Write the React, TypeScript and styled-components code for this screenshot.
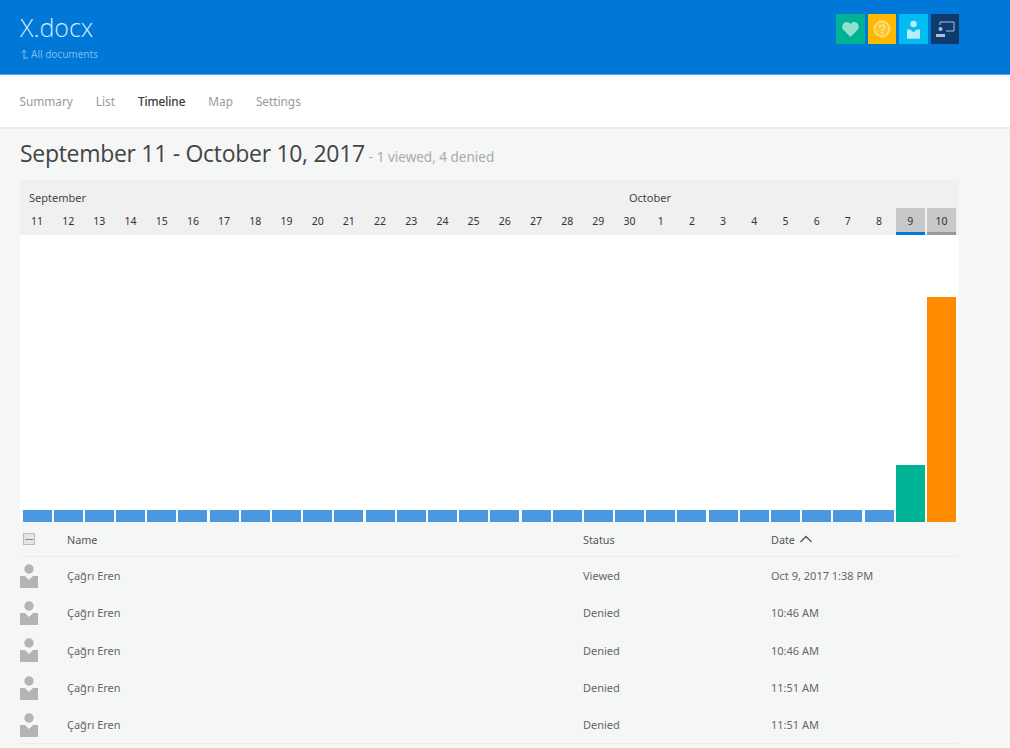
import { FC } from "react";
import styled, { createGlobalStyle } from "styled-components";

const GlobalStyle = createGlobalStyle`
  html, body {
    margin: 0;
    padding: 0;
    background: #f5f7f7;
    font-family: "Noto Sans", "Open Sans", sans-serif;
  }
`;

const Page = styled.div`
  width: 1010px;
  height: 748px;
  overflow: hidden;
  display: flex;
  flex-direction: column;
`;

const Header = styled.header`
  height: 74px;
  flex: none;
  box-sizing: content-box;
  border-bottom: 1px solid #5aa6e6;
  background: #0078d7;
  display: flex;
  justify-content: space-between;
  padding: 0 51px 0 20px;
`;

const TitleBlock = styled.div`
  display: flex;
  flex-direction: column;
  padding-top: 10px;
  color: #d3e8f9;
`;

const Title = styled.h1`
  margin: 0;
  font-size: 25px;
  line-height: 34px;
  font-weight: 300;
  font-family: "Open Sans", sans-serif;
`;

const BackLink = styled.a`
  display: flex;
  align-items: center;
  gap: 2px;
  margin-top: 3px;
  font-size: 10px;
  line-height: 14px;
  color: #7fbbec;
`;

const Badges = styled.div`
  display: flex;
  gap: 3px;
  padding-top: 14px;
`;

const Badge = styled.div<{ $color: string }>`
  width: 28.5px;
  height: 30px;
  background: ${(p) => p.$color};
  display: flex;
  align-items: center;
  justify-content: center;
`;

const Nav = styled.nav`
  height: 52px;
  flex: none;
  background: #fff;
  border-bottom: 2px solid #e9ecec;
  display: flex;
  align-items: center;
  gap: 23px;
  padding: 0 20px 0 19.5px;
`;

const NavItem = styled.a<{ $active?: boolean }>`
  font-size: 11.8px;
  color: ${(p) => (p.$active ? "#333" : "#999")};
  -webkit-text-stroke: ${(p) => (p.$active ? "0.2px #333" : "0")};
`;

const Main = styled.main`
  padding: 0 51px 0 20px;
  display: flex;
  flex-direction: column;
`;

const RangeHeading = styled.div`
  height: 51px;
  display: flex;
  align-items: baseline;
  gap: 4px;
  padding-top: 8px;
  box-sizing: border-box;
`;

const RangeTitle = styled.h2`
  margin: 0;
  font-size: 23px;
  font-weight: 400;
  color: #444;
  font-family: "Open Sans", sans-serif;
  letter-spacing: -0.3px;
`;

const RangeSummary = styled.span`
  font-size: 13.5px;
  color: #aaa;
`;

const Calendar = styled.section`
  background: #f0f0f0;
  height: 55px;
  padding: 0 2.5px;
  display: flex;
  flex-direction: column;
`;

const DayGrid = styled.div`
  display: grid;
  grid-template-columns: repeat(30, 29px);
  column-gap: 2.2px;
`;

const MonthRow = styled.div`
  height: 28px;
  display: flex;
  align-items: flex-end;
  padding: 0 0 3px 6.5px;
  box-sizing: border-box;
  font-size: 11px;
  color: #444;
`;

const OctoberLabel = styled.span`
  margin-left: 543px;
`;

const Day = styled.div<{ $marker?: string }>`
  height: 27px;
  box-sizing: border-box;
  padding-top: 2px;
  display: flex;
  align-items: center;
  justify-content: center;
  font-size: 10.5px;
  color: #333;
  background: ${(p) => (p.$marker ? "#c8c8c8" : "transparent")};
  border-bottom: 3px solid ${(p) => p.$marker ?? "transparent"};
`;

const Chart = styled(DayGrid)`
  height: 287px;
  background: #fff;
  padding: 0 2.5px;
  align-items: end;
`;

const Bar = styled.div<{ $color: string; $height: number }>`
  height: ${(p) => p.$height}px;
  background: ${(p) => p.$color};
`;

const TableHead = styled.div`
  height: 35px;
  box-sizing: border-box;
  border-bottom: 1px solid #ebeded;
  display: grid;
  grid-template-columns: 47px 516px 188px 1fr;
  align-items: center;
  font-size: 10.8px;
  color: #555;
`;

const SelectBox = styled.span`
  width: 12px;
  height: 12px;
  margin-left: 3px;
  box-sizing: border-box;
  border: 1px solid #bbb;
  background: #e6e6e6;
  display: flex;
  align-items: center;
  justify-content: center;
  &::before {
    content: "";
    width: 8px;
    height: 1px;
    background: #888;
  }
`;

const DateHead = styled.span`
  display: flex;
  align-items: center;
  gap: 4px;
`;

const TableRow = styled.div`
  height: 37.3px;
  display: grid;
  grid-template-columns: 47px 516px 188px 1fr;
  align-items: center;
  font-size: 11px;
  color: #666;
`;

const TableEnd = styled.div`
  border-top: 1px solid #ebeded;
`;

const Person: FC = () => (
  <svg width="18" height="24" viewBox="0 0 18 24" fill="#b4b4b4">
    <circle cx="9" cy="5" r="4.700" />
    <path d="M0 12h5l4 4 4-4h5v12H0z" />
  </svg>
);

const days = [
  ...Array.from({ length: 20 }, (_, i) => i + 11),
  ...Array.from({ length: 10 }, (_, i) => i + 1),
];

const markers: Record<number, string> = { 28: "#0078d7", 29: "#999" };

const bars = days.map((_, i) => {
  if (i === 28) return { color: "#00b294", height: 57 };
  if (i === 29) return { color: "#ff8c00", height: 225 };
  return { color: "#4a98e0", height: 12 };
});

const rows = [
  { status: "Viewed", date: "Oct 9, 2017 1:38 PM" },
  { status: "Denied", date: "10:46 AM" },
  { status: "Denied", date: "10:46 AM" },
  { status: "Denied", date: "11:51 AM" },
  { status: "Denied", date: "11:51 AM" },
];

const App: FC = () => (
  <Page>
    <GlobalStyle />
    <Header>
      <TitleBlock>
        <Title>X.docx</Title>
        <BackLink>
          <svg width="9" height="12" viewBox="0 0 9 12" fill="none" stroke="#7fbbec">
            <path d="M4 11V2M1.500 4.500 4 2l2.500 2.500M4 10h4" />
          </svg>
          All documents
        </BackLink>
      </TitleBlock>
      <Badges>
        <Badge $color="#00b294">
          <svg width="17" height="15" viewBox="0 0 16 14" fill="#8fe0cf">
            <path d="M8 14 1 7C-1 4 1 0 4.500 0 6 0 7.300.8 8 2c.7-1.200 2-2 3.500-2C15 0 17 4 15 7z" />
          </svg>
        </Badge>
        <Badge $color="#ffb900">
          <svg width="18" height="18" viewBox="0 0 18 18" fill="#ffc72e" stroke="#ffdc80" strokeWidth="1.800">
            <circle cx="9" cy="9" r="7.500" />
            <path d="M6.500 7.500C6.500 4.500 11.500 4.500 11.500 7.500 11.500 9.200 9 9.200 9 11M9 12v2" fill="none" />
          </svg>
        </Badge>
        <Badge $color="#00bcf2">
          <svg width="13" height="19" viewBox="0 0 14 20" fill="#b8ecfb">
            <circle cx="7" cy="4" r="3.500" />
            <path d="M0 10h3.500L7 13l3.500-3H14v10H0z" />
          </svg>
        </Badge>
        <Badge $color="#0f3a6e">
          <svg width="20" height="18" viewBox="0 0 20 18" fill="none" stroke="#a9c0d8">
            <path d="M5 5V2h14v9h-8" />
            <circle cx="5.500" cy="9" r="2" fill="#a9c0d8" stroke="none" />
            <path d="M1 17v-3h9v3z" fill="#a9c0d8" stroke="none" />
          </svg>
        </Badge>
      </Badges>
    </Header>
    <Nav>
      <NavItem>Summary</NavItem>
      <NavItem>List</NavItem>
      <NavItem $active>Timeline</NavItem>
      <NavItem>Map</NavItem>
      <NavItem>Settings</NavItem>
    </Nav>
    <Main>
      <RangeHeading>
        <RangeTitle>September 11 - October 10, 2017</RangeTitle>
        <RangeSummary>- 1 viewed, 4 denied</RangeSummary>
      </RangeHeading>
      <Calendar>
        <MonthRow>
          <span>September</span>
          <OctoberLabel>October</OctoberLabel>
        </MonthRow>
        <DayGrid>
          {days.map((d, i) => (
            <Day key={i} $marker={markers[i]}>
              {d}
            </Day>
          ))}
        </DayGrid>
      </Calendar>
      <Chart>
        {bars.map((b, i) => (
          <Bar key={i} $color={b.color} $height={b.height} />
        ))}
      </Chart>
      <TableHead>
        <SelectBox />
        <span>Name</span>
        <span>Status</span>
        <DateHead>
          Date
          <svg width="14" height="8" viewBox="0 0 14 8" fill="none" stroke="#555" strokeWidth="1.300">
            <path d="M1.500 7 7 1.500 12.500 7" />
          </svg>
        </DateHead>
      </TableHead>
      {rows.map((r, i) => (
        <TableRow key={i}>
          <Person />
          <span>Çağrı Eren</span>
          <span>{r.status}</span>
          <span>{r.date}</span>
        </TableRow>
      ))}
      <TableEnd />
    </Main>
  </Page>
);

export default App;
